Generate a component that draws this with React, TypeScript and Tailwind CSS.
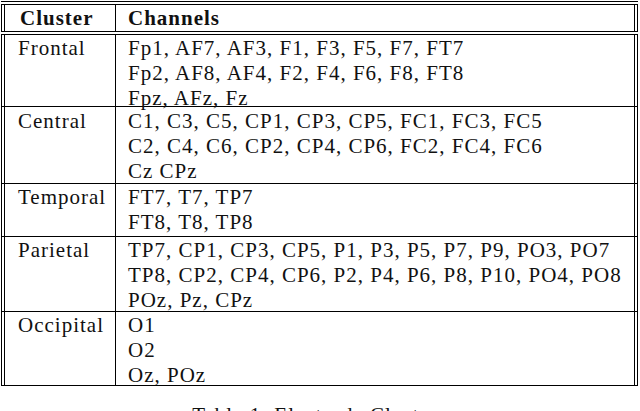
import React from "react";

type Row = { name: string; lines: string[]; h: string; pt: string };

const rows: Row[] = [
  {
    name: "Frontal",
    lines: ["Fp1, AF7, AF3, F1, F3, F5, F7, FT7", "Fp2, AF8, AF4, F2, F4, F6, F8, FT8", "Fpz, AFz, Fz"],
    h: "h-[71px]",
    pt: "pt-[1px]",
  },
  {
    name: "Central",
    lines: ["C1, C3, C5, CP1, CP3, CP5, FC1, FC3, FC5", "C2, C4, C6, CP2, CP4, CP6, FC2, FC4, FC6", "Cz CPz"],
    h: "h-[76px]",
    pt: "pt-[2px]",
  },
  {
    name: "Temporal",
    lines: ["FT7, T7, TP7", "FT8, T8, TP8"],
    h: "h-[52px]",
    pt: "pt-[1px]",
  },
  {
    name: "Parietal",
    lines: [
      "TP7, CP1, CP3, CP5, P1, P3, P5, P7, P9, PO3, PO7",
      "TP8, CP2, CP4, CP6, P2, P4, P6, P8, P10, PO4, PO8",
      "POz, Pz, CPz",
    ],
    h: "h-[74px]",
    pt: "pt-[1px]",
  },
  {
    name: "Occipital",
    lines: ["O1", "O2", "Oz, POz"],
    h: "h-[73px]",
    pt: "pt-[1px]",
  },
];

const HLine = () => <div className="h-px bg-black" />;

export default function App() {
  return (
    <div className="w-[640px] h-[411px] overflow-hidden bg-white text-[#111] text-[21px] leading-[25px] tracking-[1px] font-['Liberation_Serif','Times_New_Roman',serif]">
      <div className="mt-[1px] ml-[1px] w-[637px]">
        <HLine />
        <div className="h-[2px]" />
        <HLine />
        <div className="border-x border-black px-[2px]">
          <div className="border-x border-black flex h-[26px] items-center font-bold">
            <div className="w-[110px] pl-[15px]">Cluster</div>
            <div className="border-l border-black h-full flex items-center pl-[12px]">Channels</div>
          </div>
        </div>
        <HLine />
        <div className="h-[2px]" />
        <HLine />
        {rows.map((r) => (
          <React.Fragment key={r.name}>
            <div className="border-x border-black px-[2px]">
              <div className={`border-x border-black flex ${r.h}`}>
                <div className={`w-[110px] pl-[13px] ${r.pt}`}>{r.name}</div>
                <div className={`flex-1 border-l border-black pl-[12px] ${r.pt}`}>
                  {r.lines.map((l) => (
                    <div key={l} className="whitespace-nowrap">
                      {l}
                    </div>
                  ))}
                </div>
              </div>
            </div>
            <HLine />
          </React.Fragment>
        ))}
        <div className="mt-[17px] text-center whitespace-nowrap">Table 1: Electrode Clusters</div>
      </div>
    </div>
  );
}
